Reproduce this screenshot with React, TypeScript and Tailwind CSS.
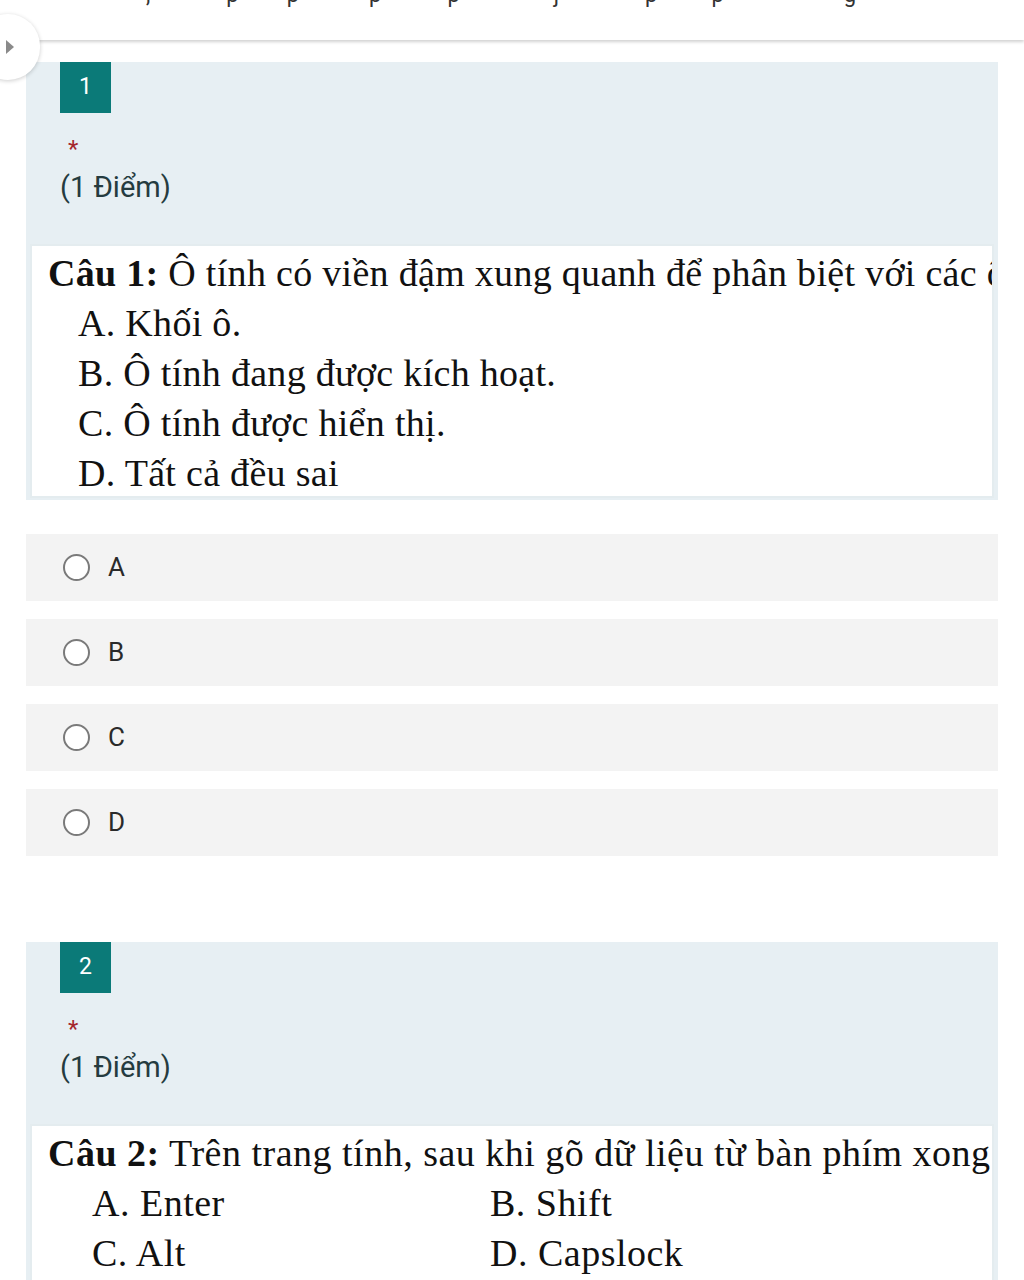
import React from 'react';

const serif = { fontFamily: '"Liberation Serif", "Times New Roman", serif' };
const sans = { fontFamily: 'Roboto, "Noto Sans", "Liberation Sans", sans-serif' };

function QuestionHeader({ num }: { num: number }) {
  return (
    <div className="pl-[34px] pb-[41px]">
      <div className="w-[51px] h-[51px] bg-[#0b7a78] flex items-center justify-center text-white text-[23px]" style={sans}>
        {num}
      </div>
      <div className="text-[#a4262c] text-[24px] leading-none ml-[8px] mt-[24px] h-[16px]" style={sans}>*</div>
      <div className="text-[#253b3f] text-[29px] mt-[18px] leading-[32px]" style={sans}>(1 Điểm)</div>
    </div>
  );
}

function Radio({ label }: { label: string }) {
  return (
    <div className="h-[67px] bg-[#f3f3f3] flex items-center pl-[37px]">
      <div className="w-[27px] h-[27px] rounded-full border-2 border-[#7a7a7a] bg-white" />
      <span className="ml-[18px] text-[26px] text-[#2a2a2a]" style={sans}>{label}</span>
    </div>
  );
}

export default function App() {
  return (
    <div className="w-[1024px] h-[1280px] bg-white overflow-hidden relative">
      {/* thanh tiêu đề trên cùng, chữ bị cắt phía trên */}
      <div className="h-[40px] bg-white shadow-[0_2px_3px_rgba(0,0,0,0.18)] relative z-10 overflow-hidden">
        <div className="-mt-[22px] text-[#333] text-[22px] whitespace-nowrap" style={sans}>
          <span className="ml-[146px]">,</span>
          <span className="ml-[76px]">p</span>
          <span className="ml-[48px]">p</span>
          <span className="ml-[70px]">p</span>
          <span className="ml-[66px]">p</span>
          <span className="ml-[94px]">j</span>
          <span className="ml-[86px]">p</span>
          <span className="ml-[54px]">p</span>
          <span className="ml-[120px]">g</span>
        </div>
      </div>
      <div className="absolute left-[-24px] top-[14px] w-[64px] h-[66px] rounded-full bg-white shadow-[0_1px_4px_rgba(0,0,0,0.2)] z-20 flex items-center justify-end pr-[26px]">
        <svg width="8" height="14" viewBox="0 0 8 14">
          <path d="M0 0 L8 7 L0 14 Z" fill="#8a8a8a" />
        </svg>
      </div>

      <div className="px-[26px] pt-[22px]">
        {/* Câu 1 */}
        <div className="bg-[#e7eff3] pb-[2px]">
          <QuestionHeader num={1} />
          <div className="mx-[4px] bg-white border-2 border-[#e4ecef] h-[254px] pl-[16px] pt-[2px] overflow-hidden whitespace-nowrap text-[38px] tracking-[0.3px] text-[#111] leading-[50px]" style={serif}>
            <div><b>Câu 1:</b> Ô tính có viền đậm xung quanh để phân biệt với các ô</div>
            <div className="pl-[30px]">A. Khối ô.</div>
            <div className="pl-[30px]">B. Ô tính đang được kích hoạt.</div>
            <div className="pl-[30px]">C. Ô tính được hiển thị.</div>
            <div className="pl-[30px]">D. Tất cả đều sai</div>
          </div>
        </div>

        <div className="mt-[34px] flex flex-col gap-[18px]">
          <Radio label="A" />
          <Radio label="B" />
          <Radio label="C" />
          <Radio label="D" />
        </div>

        {/* Câu 2 */}
        <div className="bg-[#e7eff3] mt-[86px]">
          <QuestionHeader num={2} />
          <div className="mx-[4px] bg-white border-2 border-b-0 border-[#e4ecef] h-[160px] pl-[16px] pt-[2px] overflow-hidden whitespace-nowrap text-[38px] tracking-[0.5px] text-[#111] leading-[50px]" style={serif}>
            <div><b>Câu 2:</b> Trên trang tính, sau khi gõ dữ liệu từ bàn phím xong</div>
            <div className="flex pl-[44px]">
              <span className="w-[398px]">A. Enter</span>
              <span>B. Shift</span>
            </div>
            <div className="flex pl-[44px]">
              <span className="w-[398px]">C. Alt</span>
              <span>D. Capslock</span>
            </div>
          </div>
        </div>
      </div>
    </div>
  );
}
